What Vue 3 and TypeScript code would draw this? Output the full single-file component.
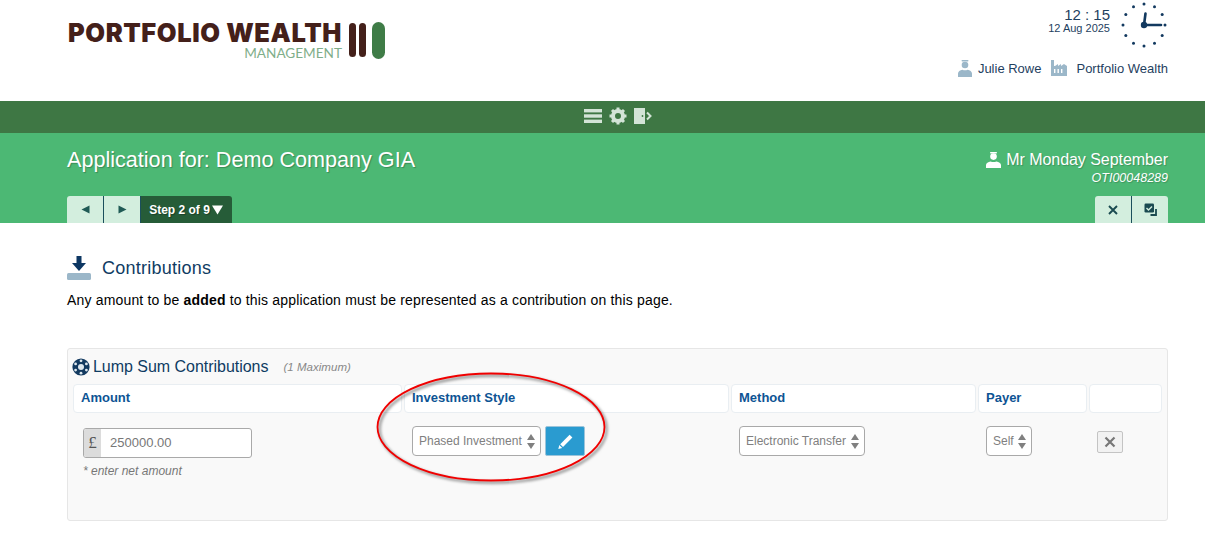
<script setup lang="ts">
const ticks = Array.from({ length: 12 }, (_, i) => {
  const a = (i * Math.PI) / 6
  return { x: 25 + 21 * Math.sin(a), y: 25 - 21 * Math.cos(a) }
})
</script>

<template>
  <div class="page">
    <header class="top">
      <div class="logo">
        <div class="logo-text">
          <div class="logo-main">PORTFOLIO WEALTH</div>
          <div class="logo-sub">MANAGEMENT</div>
        </div>
        <div class="logo-bars">
          <span class="bar brown"></span>
          <span class="bar brown"></span>
          <span class="bar green"></span>
        </div>
      </div>
      <div class="top-right">
        <div class="clock-row">
          <div class="time">
            <div class="hm">12 : 15</div>
            <div class="date">12 Aug 2025</div>
          </div>
          <svg class="clock" width="50" height="50" viewBox="0 0 50 50">
            <circle v-for="(t, i) in ticks" :key="i" :cx="t.x" :cy="t.y" r="1.5" fill="#12395f" />
            <path d="M25 25 L26.5 13.5" stroke="#12395f" stroke-width="2.6" stroke-linecap="round" />
            <path d="M25 25 L42 25" stroke="#12395f" stroke-width="2.6" stroke-linecap="round" />
            <circle cx="25" cy="25" r="3.2" fill="#12395f" />
          </svg>
        </div>
        <div class="user-row">
          <svg width="14" height="17" viewBox="0 0 14 17" fill="#9bb7c9">
            <circle cx="7" cy="5" r="3.3" />
            <rect x="3.5" y="0" width="7" height="1.6" rx="0.8" />
            <path d="M0 17v-3.5c0-2 2-3.4 4.4-3.8 1.6.7 3.6.7 5.2 0 2.4.4 4.4 1.8 4.4 3.8V17z" />
          </svg>
          <span class="u-name">Julie Rowe</span>
          <svg class="factory" width="16" height="16" viewBox="0 0 16 16">
            <path fill="#9bb7c9" d="M0 0h3v6h1l3-2v2l3-2v2l3-2 3 2v10H0z" />
            <path fill="#fff" d="M3 9h1.4v4H3zM6.5 9h1.4v4H6.5zM10 9h1.4v4H10z" />
          </svg>
          <span class="u-org">Portfolio Wealth</span>
        </div>
      </div>
    </header>

    <nav class="toolbar">
      <svg width="18" height="14" viewBox="0 0 18 14" fill="#d3e4d7">
        <rect width="18" height="3.4" /><rect y="5.3" width="18" height="3.4" /><rect y="10.6" width="18" height="3.4" />
      </svg>
      <svg width="18" height="18" viewBox="0 0 18 18">
        <circle cx="9" cy="9" r="5" fill="none" stroke="#d3e4d7" stroke-width="4" />
        <path d="M9 0.5v3M9 14.5v3M0.5 9h3M14.5 9h3M3 3l2 2M13 13l2 2M15 3l-2 2M5 13l-2 2" stroke="#d3e4d7" stroke-width="3" />
      </svg>
      <svg width="18" height="16" viewBox="0 0 18 16">
        <rect width="11" height="16" fill="#d3e4d7" />
        <circle cx="8.5" cy="8" r="0.9" fill="#3e7744" />
        <path d="M13 4.5 L16.5 8 L13 11.5" fill="none" stroke="#d3e4d7" stroke-width="2" />
      </svg>
    </nav>

    <section class="banner">
      <div class="banner-top">
        <h1 class="title">Application for: Demo Company GIA</h1>
        <div class="client">
          <div class="client-name">
            <svg width="15" height="16" viewBox="0 0 15 16" fill="#fff">
              <circle cx="7.5" cy="4.6" r="3.3" />
              <rect x="4" y="0" width="7" height="1.5" rx="0.7" />
              <path d="M0 16v-3c0-2 2.2-3.3 4.6-3.6 1.8.7 4 .7 5.8 0 2.4.3 4.6 1.6 4.6 3.6v3z" />
            </svg>
            <span>Mr Monday September</span>
          </div>
          <div class="client-ref">OTI00048289</div>
        </div>
      </div>
      <div class="banner-tabs">
        <div class="tabs">
          <button class="tab first sep">
            <svg width="9" height="9" viewBox="0 0 9 9" fill="#1f5a55"><path d="M8.5 0.5v8L0.5 4.5z" /></svg>
          </button>
          <button class="tab sep">
            <svg width="9" height="9" viewBox="0 0 9 9" fill="#1f5a55"><path d="M0.5 0.5v8l8-4z" /></svg>
          </button>
          <button class="tab step">
            <span>Step 2 of 9</span>
            <svg width="11" height="10" viewBox="0 0 11 10" fill="#fff"><path d="M0 0.5h11L5.5 9.5z" /></svg>
          </button>
        </div>
        <div class="tabs">
          <button class="tab first sep">
            <svg width="10" height="10" viewBox="0 0 10 10"><path d="M1 1l8 8M9 1l-8 8" stroke="#1a4a50" stroke-width="1.9" /></svg>
          </button>
          <button class="tab last">
            <svg width="13" height="13" viewBox="0 0 13 13">
              <rect x="0.5" y="0.5" width="9.5" height="9" rx="1.2" fill="#1a4a50" />
              <path d="M2.5 5l2 2 3.5-3.5" fill="none" stroke="#d3eede" stroke-width="1.4" />
              <path d="M12 6v6H6.5" fill="none" stroke="#1a4a50" stroke-width="1.8" />
            </svg>
          </button>
        </div>
      </div>
    </section>

    <main class="content">
      <div class="heading">
        <svg width="24" height="24" viewBox="0 0 24 24">
          <path d="M9.5 0h5v7h4.5L12 15 5 7h4.5z" fill="#0d3763" />
          <rect y="17" width="24" height="7" rx="1.5" fill="#9bb7c9" />
        </svg>
        <h2>Contributions</h2>
      </div>
      <p class="intro">Any amount to be <b>added</b> to this application must be represented as a contribution on this page.</p>

      <section class="panel">
        <div class="panel-title">
          <svg width="18" height="18" viewBox="0 0 18 18">
            <circle cx="9" cy="9" r="8.6" fill="#12395f" />
            <circle cx="9" cy="9" r="3" fill="#dfe8ee" />
            <g fill="#dfe8ee">
              <circle cx="9" cy="2.8" r="1.4" /><circle cx="9" cy="15.2" r="1.4" />
              <circle cx="3.6" cy="5.9" r="1.4" /><circle cx="14.4" cy="5.9" r="1.4" />
              <circle cx="3.6" cy="12.1" r="1.4" /><circle cx="14.4" cy="12.1" r="1.4" />
            </g>
          </svg>
          <span class="pt-text">Lump Sum Contributions</span>
          <span class="pt-note">(1 Maximum)</span>
        </div>

        <div class="grid head">
          <div class="hcell">Amount</div>
          <div class="hcell">Investment Style</div>
          <div class="hcell">Method</div>
          <div class="hcell">Payer</div>
          <div class="hcell"></div>
        </div>

        <div class="grid row">
          <div class="cell amount">
            <div class="input">
              <span class="addon">£</span>
              <span class="value">250000.00</span>
            </div>
            <div class="hint">* enter net amount</div>
          </div>
          <div class="cell style">
            <div class="select w-style">
              <span>Phased Investment</span>
              <span class="spin"><i class="up"></i><i class="down"></i></span>
            </div>
            <button class="edit">
              <svg width="17" height="17" viewBox="0 0 17 17" fill="#fff">
                <path d="M12.6 1.8l2.8 2.8-9.4 9.4-2.8-2.8z" />
                <path d="M2.3 12l2.9 2.9-3.9 1z" />
              </svg>
            </button>
          </div>
          <div class="cell">
            <div class="select w-method">
              <span>Electronic Transfer</span>
              <span class="spin"><i class="up"></i><i class="down"></i></span>
            </div>
          </div>
          <div class="cell">
            <div class="select w-self">
              <span>Self</span>
              <span class="spin"><i class="up"></i><i class="down"></i></span>
            </div>
          </div>
          <div class="cell del">
            <button class="remove">
              <svg width="12" height="12" viewBox="0 0 12 12"><path d="M1.5 1.5l9 9M10.5 1.5l-9 9" stroke="#777" stroke-width="2.2" /></svg>
            </button>
          </div>
        </div>

        <svg class="ring" width="240" height="118" viewBox="0 0 240 118">
          <ellipse cx="120" cy="56" rx="113.5" ry="53.5" fill="none" stroke="#f00000" stroke-width="1.8" />
        </svg>
      </section>
    </main>
  </div>
</template>

<style>
html, body { margin: 0; background: #fff; }
</style>

<style scoped>
.page {
  width: 1205px;
  height: 536px;
  overflow: hidden;
  font-family: "Liberation Sans", Arial, sans-serif;
  color: #000;
  background: #fff;
}
.top {
  height: 101px;
  display: flex;
  justify-content: space-between;
  padding: 0 37px 0 68px;
  box-sizing: border-box;
}
.logo { display: flex; align-items: flex-start; padding-top: 22px; }
.logo-text { width: 274px; }
.logo-main {
  font-family: Inter, "Liberation Sans", sans-serif;
  font-weight: 900;
  font-size: 25.5px;
  line-height: 22px;
  color: #44201a;
  white-space: nowrap;
  letter-spacing: 0.58px;
}
.logo-sub {
  font-family: Lato, "Liberation Sans", sans-serif;
  font-size: 13.6px;
  line-height: 14px;
  color: #7fae8a;
  text-align: right;
  margin-top: 2px;
}
.logo-bars { display: flex; gap: 3px; margin-left: 7px; align-items: flex-start; }
.bar { display: block; border-radius: 4px; width: 7px; height: 34px; margin-top: 1px; }
.bar.brown { background: #44201a; }
.bar.green { background: #3f7c47; width: 13px; height: 37px; border-radius: 7px; margin-left: 3px; margin-top: 0; }
.top-right { display: flex; flex-direction: column; align-items: flex-end; }
.clock-row { display: flex; align-items: flex-start; justify-content: flex-end; margin-right: -1px; }
.time { text-align: right; padding-top: 7px; margin-right: 9px; color: #1f3f5f; }
.hm { font-size: 15px; line-height: 16px; }
.date { font-size: 11px; line-height: 13px; margin-top: -1px; }
.clock { display: block; }
.user-row {
  display: flex;
  align-items: center;
  font-size: 13px;
  color: #1f3f5f;
  height: 18px;
  margin-top: 9px;
}
.u-name { margin-left: 6px; }
.factory { margin-left: 10px; }
.u-org { margin-left: 9px; }
.toolbar {
  height: 32px;
  background: #3e7744;
  display: flex;
  align-items: center;
  justify-content: center;
  gap: 7px;
  padding: 0 0 3px 30px;
  box-sizing: border-box;
}
.banner {
  height: 90px;
  background: #4cb874;
  padding: 0 37px 0 67px;
  display: flex;
  flex-direction: column;
  justify-content: space-between;
  box-sizing: border-box;
}
.banner-top { display: flex; justify-content: space-between; padding-top: 14px; }
.title {
  margin: 0;
  font-size: 21.6px;
  font-weight: 400;
  line-height: 26px;
  color: #fff;
  text-shadow: 1px 1px 1px rgba(0, 0, 0, 0.25);
}
.client { text-align: right; color: #fff; text-shadow: 1px 1px 1px rgba(0, 0, 0, 0.2); }
.client-name {
  display: flex;
  align-items: center;
  justify-content: flex-end;
  gap: 5px;
  font-size: 16px;
  line-height: 20px;
  margin-top: 3px;
  letter-spacing: -0.05px;
}
.client-ref { font-size: 12.5px; font-style: italic; line-height: 16px; margin-top: 0; }
.banner-tabs { display: flex; justify-content: space-between; align-items: flex-end; }
.tabs { display: flex; }
.tab {
  width: 36px;
  height: 27px;
  border: 0;
  padding: 0;
  background: #d3eede;
  display: flex;
  align-items: center;
  justify-content: center;
  font-family: inherit;
  box-sizing: border-box;
}
.tab.sep { width: 37px; border-right: 1px solid #1b4f5c; }
.tab.first { border-radius: 3px 0 0 0; }
.tab.last { border-radius: 0 3px 0 0; }
.tab.step {
  width: 91px;
  background: #265c38;
  color: #fff;
  font-weight: 700;
  font-size: 12px;
  gap: 2px;
  padding-right: 1px;
  border-radius: 0 3px 0 0;
  text-shadow: 1px 1px 1px rgba(0, 0, 0, 0.3);
}
.content { padding: 33px 37px 0 67px; }
.heading { display: flex; align-items: center; height: 24px; }
.heading h2 {
  margin: 1px 0 0 11px;
  font-size: 18px;
  font-weight: 400;
  color: #0f3c63;
  letter-spacing: 0.25px;
}
.intro { margin: 12px 0 0; font-size: 14px; line-height: 16px; letter-spacing: 0.17px; }
.panel {
  position: relative;
  margin-top: 40px;
  height: 173px;
  box-sizing: border-box;
  background: #f9f9f9;
  border: 1px solid #e6e6e6;
  border-radius: 3px;
  padding: 0 5px;
}
.panel-title { display: flex; align-items: center; height: 35px; padding-top: 1px; box-sizing: border-box; margin-left: -1px; }
.pt-text { font-size: 16px; color: #0f3c63; margin-left: 3px; letter-spacing: -0.03px; }
.pt-note { font-size: 11.5px; font-style: italic; color: #888; margin-left: 15px; letter-spacing: 0.03px; }
.grid {
  display: grid;
  grid-template-columns: 329px 325px 245px 109px 73px;
  column-gap: 2px;
}
.hcell {
  height: 29px;
  box-sizing: border-box;
  background: #fff;
  border: 1px solid #e9eef2;
  border-radius: 4px;
  padding: 0 7px;
  line-height: 25px;
  font-size: 13px;
  font-weight: 700;
  color: #0d5494;
}
.row { padding-top: 13px; }
.cell { padding-left: 8px; display: flex; align-items: flex-start; }
.amount { display: block; padding-left: 10px; padding-top: 2px; }
.input {
  width: 169px;
  height: 30px;
  box-sizing: border-box;
  display: flex;
  background: #fff;
  border: 1px solid #a9a9a9;
  border-radius: 3px;
  overflow: hidden;
  font-size: 13px;
  color: #777;
}
.addon {
  width: 17px;
  background: #dcdcdc;
  text-align: center;
  line-height: 27px;
  font-size: 17px;
  color: #555;
  font-family: "Liberation Serif", serif;
}
.value { margin-left: 9px; line-height: 28px; font-size: 13px; }
.hint { margin-top: 5px; font-size: 12px; font-style: italic; color: #777; line-height: 16px; }
.select {
  height: 30px;
  box-sizing: border-box;
  background: #fff;
  border: 1px solid #a9a9a9;
  border-radius: 4px;
  display: flex;
  align-items: center;
  justify-content: space-between;
  padding: 0 5px 0 6px;
  font-size: 12px;
  color: #808080;
  white-space: nowrap;
}
.w-style { width: 129px; }
.w-method { width: 126px; }
.w-self { width: 46px; }
.spin { display: flex; flex-direction: column; gap: 3px; }
.spin i { display: block; width: 0; height: 0; border-left: 4px solid transparent; border-right: 4px solid transparent; }
.spin .up { border-bottom: 6px solid #808080; }
.spin .down { border-top: 6px solid #808080; }
.edit {
  margin-left: 4px;
  width: 40px;
  height: 30px;
  padding: 0;
  border: 1px solid #9cc4da;
  border-radius: 2px;
  background: #2a9bd0;
  display: flex;
  align-items: center;
  justify-content: center;
}
.del { padding-left: 8px; padding-top: 5px; }
.remove {
  width: 26px;
  height: 22px;
  padding: 0;
  background: #f2f2f2;
  border: 1px solid #c4c4c4;
  border-radius: 2px;
  display: flex;
  align-items: center;
  justify-content: center;
}
.ring {
  position: absolute;
  left: 303px;
  top: 22px;
  pointer-events: none;
  filter: drop-shadow(2px 2px 1.5px rgba(0, 0, 0, 0.55));
}
</style>
